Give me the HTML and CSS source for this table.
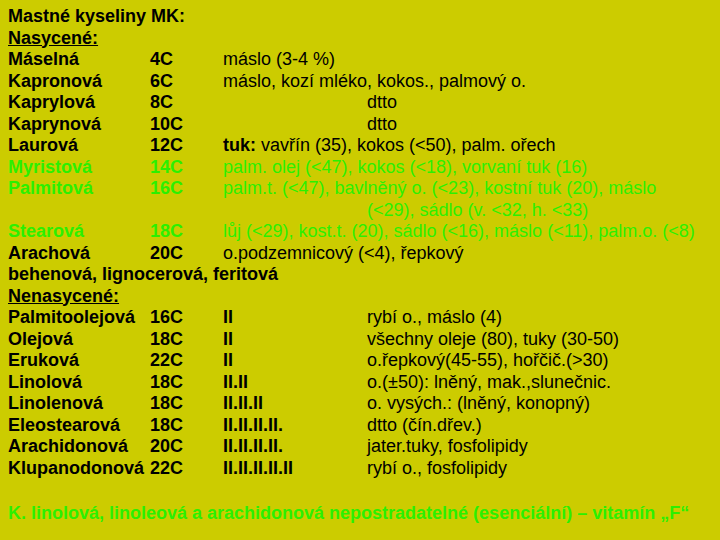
FILE: index.html
```html
<!DOCTYPE html>
<html lang="cs">
<head>
<meta charset="utf-8">
<title>Mastné kyseliny</title>
<link rel="stylesheet" href="styles.css">
</head>
<body>
<div class="sheet">
  <div class="full b">Mastné kyseliny MK:</div>
  <div class="full b"><span class="u">Nasycené:</span></div>

  <div class="b">Máselná</div><div class="b">4C</div><div class="wide">máslo (3-4 %)</div>
  <div class="b">Kapronová</div><div class="b">6C</div><div class="wide">máslo, kozí mléko, kokos., palmový o.</div>
  <div class="b">Kaprylová</div><div class="b">8C</div><div class="c4">dtto</div>
  <div class="b">Kaprynová</div><div class="b">10C</div><div class="c4">dtto</div>
  <div class="b">Laurová</div><div class="b">12C</div><div class="wide"><span class="b">tuk:</span> vavřín (35), kokos (&lt;50), palm. ořech</div>

  <div class="b g">Myristová</div><div class="b g">14C</div><div class="wide g">palm. olej (&lt;47), kokos (&lt;18), vorvaní tuk (16)</div>
  <div class="b g">Palmitová</div><div class="b g">16C</div><div class="wide g">palm.t. (&lt;47), bavlněný o. (&lt;23), kostní tuk (20), máslo</div>
  <div class="c4 g">(&lt;29), sádlo (v. &lt;32, h. &lt;33)</div>
  <div class="b g">Stearová</div><div class="b g">18C</div><div class="wide g">lůj (&lt;29), kost.t. (20), sádlo (&lt;16), máslo (&lt;11), palm.o. (&lt;8)</div>
  <div class="b">Arachová</div><div class="b">20C</div><div class="wide">o.podzemnicový (&lt;4), řepkový</div>
  <div class="full b">behenová, lignocerová, feritová</div>

  <div class="full b"><span class="u">Nenasycené:</span></div>
  <div class="b">Palmitoolejová</div><div class="b">16C</div><div class="b">II</div><div>rybí o., máslo (4)</div>
  <div class="b">Olejová</div><div class="b">18C</div><div class="b">II</div><div>všechny oleje (80), tuky (30-50)</div>
  <div class="b">Eruková</div><div class="b">22C</div><div class="b">II</div><div>o.řepkový(45-55), hořčič.(&gt;30)</div>
  <div class="b">Linolová</div><div class="b">18C</div><div class="b">II.II</div><div>o.(±50): lněný, mak.,slunečnic.</div>
  <div class="b">Linolenová</div><div class="b">18C</div><div class="b">II.II.II</div><div>o. vysých.: (lněný, konopný)</div>
  <div class="b">Eleostearová</div><div class="b">18C</div><div class="b">II.II.II.II.</div><div>dtto (čín.dřev.)</div>
  <div class="b">Arachidonová</div><div class="b">20C</div><div class="b">II.II.II.II.</div><div>jater.tuky, fosfolipidy</div>
  <div class="b">Klupanodonová</div><div class="b">22C</div><div class="b">II.II.II.II.II</div><div>rybí o., fosfolipidy</div>
</div>
<p class="note">K. linolová, linoleová a arachidonová nepostradatelné (esenciální) – vitamín „F“</p>
</body>
</html>
```
FILE: styles.css
```css
html, body {
  margin: 0;
  padding: 0;
  background: #cccc00;
}
body {
  width: 720px;
  height: 540px;
  overflow: hidden;
  font-family: "Liberation Sans", Arial, sans-serif;
  font-size: 18px;
  color: #000;
}
.sheet {
  display: grid;
  grid-template-columns: 142px 73px 144px 1fr;
  grid-auto-rows: 21.5px;
  line-height: 21.5px;
  padding: 6px 0 0 8px;
  white-space: nowrap;
}
.full { grid-column: 1 / -1; }
.wide { grid-column: 3 / -1; }
.c4 { grid-column: 4 / 5; }
.b { font-weight: bold; }
.u { text-decoration: underline; }
.g { color: #2bf000; }
.note {
  margin: 24px 0 0 8px;
  line-height: 21.5px;
  font-weight: bold;
  font-size: 18px;
  color: #2bf000;
  white-space: nowrap;
}
```
